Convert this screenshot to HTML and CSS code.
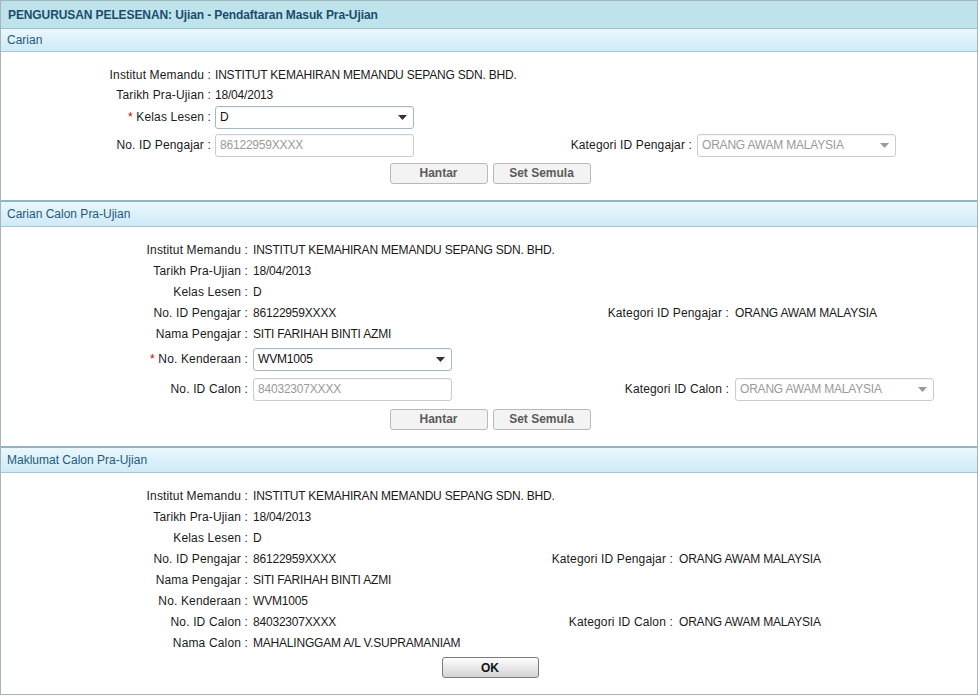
FILE: index.html
```html
<!DOCTYPE html>
<html>
<head>
<meta charset="utf-8">
<title>Pendaftaran Masuk Pra-Ujian</title>
<link rel="stylesheet" href="styles.css">
</head>
<body>
<div class="panel">
  <div class="titlebar">PENGURUSAN PELESENAN: Ujian - Pendaftaran Masuk Pra-Ujian</div>

  <div class="sec-head first">Carian</div>
  <div class="sec-body">
    <div class="grid g1">
      <div class="lbl">Institut Memandu :</div><div class="val span3">INSTITUT KEMAHIRAN MEMANDU SEPANG SDN. BHD.</div>
      <div class="lbl">Tarikh Pra-Ujian :</div><div class="val span3">18/04/2013</div>
      <div class="lbl"><span class="req">*</span> Kelas Lesen :</div>
      <div class="val span3"><div class="sel"><span>D</span><svg class="arr" width="9" height="5" viewBox="0 0 9 5"><path d="M0 0H9L4.5 5Z" fill="#333"/></svg></div></div>
      <div class="lbl">No. ID Pengajar :</div>
      <div class="val"><div class="inp">86122959XXXX</div></div>
      <div class="lbl">Kategori ID Pengajar :</div>
      <div class="val v2"><div class="sel dis"><span>ORANG AWAM MALAYSIA</span><svg class="arr" width="9" height="5" viewBox="0 0 9 5"><path d="M0 0H9L4.5 5Z" fill="#9a9a9a"/></svg></div></div>
      <div class="btnrow"><button class="btn">Hantar</button><button class="btn">Set Semula</button></div>
    </div>
  </div>

  <div class="sec-head">Carian Calon Pra-Ujian</div>
  <div class="sec-body b2">
    <div class="grid g2">
      <div class="lbl">Institut Memandu :</div><div class="val span3">INSTITUT KEMAHIRAN MEMANDU SEPANG SDN. BHD.</div>
      <div class="lbl">Tarikh Pra-Ujian :</div><div class="val span3">18/04/2013</div>
      <div class="lbl">Kelas Lesen :</div><div class="val span3">D</div>
      <div class="lbl">No. ID Pengajar :</div><div class="val">86122959XXXX</div>
      <div class="lbl">Kategori ID Pengajar :</div><div class="val v2">ORANG AWAM MALAYSIA</div>
      <div class="lbl">Nama Pengajar :</div><div class="val span3">SITI FARIHAH BINTI AZMI</div>
      <div class="lbl"><span class="req">*</span> No. Kenderaan :</div>
      <div class="val span3"><div class="sel"><span>WVM1005</span><svg class="arr" width="9" height="5" viewBox="0 0 9 5"><path d="M0 0H9L4.5 5Z" fill="#333"/></svg></div></div>
      <div class="lbl">No. ID Calon :</div>
      <div class="val"><div class="inp">84032307XXXX</div></div>
      <div class="lbl">Kategori ID Calon :</div>
      <div class="val v2"><div class="sel dis"><span>ORANG AWAM MALAYSIA</span><svg class="arr" width="9" height="5" viewBox="0 0 9 5"><path d="M0 0H9L4.5 5Z" fill="#9a9a9a"/></svg></div></div>
      <div class="btnrow"><button class="btn">Hantar</button><button class="btn">Set Semula</button></div>
    </div>
  </div>

  <div class="sec-head">Maklumat Calon Pra-Ujian</div>
  <div class="sec-body b3">
    <div class="grid g3">
      <div class="lbl">Institut Memandu :</div><div class="val span3">INSTITUT KEMAHIRAN MEMANDU SEPANG SDN. BHD.</div>
      <div class="lbl">Tarikh Pra-Ujian :</div><div class="val span3">18/04/2013</div>
      <div class="lbl">Kelas Lesen :</div><div class="val span3">D</div>
      <div class="lbl">No. ID Pengajar :</div><div class="val">86122959XXXX</div>
      <div class="lbl">Kategori ID Pengajar :</div><div class="val v2">ORANG AWAM MALAYSIA</div>
      <div class="lbl">Nama Pengajar :</div><div class="val span3">SITI FARIHAH BINTI AZMI</div>
      <div class="lbl">No. Kenderaan :</div><div class="val span3">WVM1005</div>
      <div class="lbl">No. ID Calon :</div><div class="val">84032307XXXX</div>
      <div class="lbl">Kategori ID Calon :</div><div class="val v2">ORANG AWAM MALAYSIA</div>
      <div class="lbl">Nama Calon :</div><div class="val span3">MAHALINGGAM A/L V.SUPRAMANIAM</div>
      <div class="btnrow"><button class="btn ok">OK</button></div>
    </div>
  </div>
</div>
</body>
</html>
```
FILE: styles.css
```css
html, body {
  margin: 0;
  padding: 0;
  background: #ffffff;
}
body {
  font-family: "Liberation Sans", Arial, sans-serif;
  font-size: 12px;
  color: #1a1a1a;
}
.panel {
  width: 976px;
  border: 1px solid #a3b6be;
  box-sizing: content-box;
}
.titlebar {
  height: 27px;
  line-height: 29px;
  padding-left: 7px;
  background: #bfe3eb;
  color: #1b4d6e;
  font-weight: bold;
  border-bottom: 1px solid #9dbec9;
  letter-spacing: -0.1px;
}
.sec-head {
  height: 24px;
  line-height: 25px;
  padding-left: 6px;
  background: linear-gradient(#eaf7fd, #cfeaf8);
  color: #1f5a7b;
  border-top: 2px solid #94b4c1;
  border-bottom: 1px solid #a9c6d1;
}
.sec-head.first {
  height: 22px;
  line-height: 23px;
  border-top: none;
}
.sec-body {
  padding: 13px 0 15px;
}
.sec-body.b2 {
  padding: 12px 0 12px;
}
.sec-body.b3 {
  padding: 12px 0 12px;
}
.grid {
  display: grid;
  align-items: center;
}
.g1 {
  grid-template-columns: 210px 355px 126px 1fr;
  grid-template-rows: 20px 20px 24px 32px 24px;
}
.g2 {
  grid-template-columns: 247px 352px 129px 1fr;
  grid-template-rows: repeat(5, 21px) 30px 30px 30px;
}
.g3 {
  grid-template-columns: 247px 302px 123px 1fr;
  grid-template-rows: repeat(8, 21px) 29px;
}
.lbl {
  text-align: right;
  white-space: nowrap;
  letter-spacing: 0.15px;
}
.val {
  padding-left: 4px;
  white-space: nowrap;
  letter-spacing: -0.2px;
}
.g2 .val, .g3 .val {
  padding-left: 5px;
}
.val.v2 {
  padding-left: 5px;
}
.g2 .val.v2, .g3 .val.v2 {
  padding-left: 6px;
}
.span3 {
  grid-column: 2 / span 3;
}
.req {
  color: #d40000;
}
.sel, .inp {
  position: relative;
  box-sizing: border-box;
  width: 199px;
  height: 23px;
  line-height: 21px;
  padding-left: 4px;
  border: 1px solid #a6b6c4;
  border-radius: 3px;
  background: #ffffff;
  color: #111;
  box-shadow: inset 0 1px 1px rgba(0,0,0,0.04);
  letter-spacing: -0.2px;
}
.sel .arr {
  position: absolute;
  right: 6px;
  top: 8px;
}
.sel.dis {
  border-color: #c9cdd0;
  color: #9a9a9a;
}
.inp {
  border-color: #cbcbcb;
  color: #9a9a9a;
}
.btnrow {
  grid-column: 1 / span 4;
  display: flex;
  justify-content: center;
  gap: 5px;
  padding-left: 2px;
}
.btn {
  box-sizing: border-box;
  width: 98px;
  height: 21px;
  padding: 0;
  font-family: "Liberation Sans", Arial, sans-serif;
  font-size: 12px;
  font-weight: bold;
  color: #5a5a5a;
  background: #f3f3f3;
  border: 1px solid #b9b9b9;
  border-radius: 3px;
}
.btn.ok {
  width: 97px;
  color: #111;
  background: linear-gradient(#fdfdfd, #e6e6e6 55%, #d4d4d4);
  border: 1px solid #7b7b7b;
}
```
